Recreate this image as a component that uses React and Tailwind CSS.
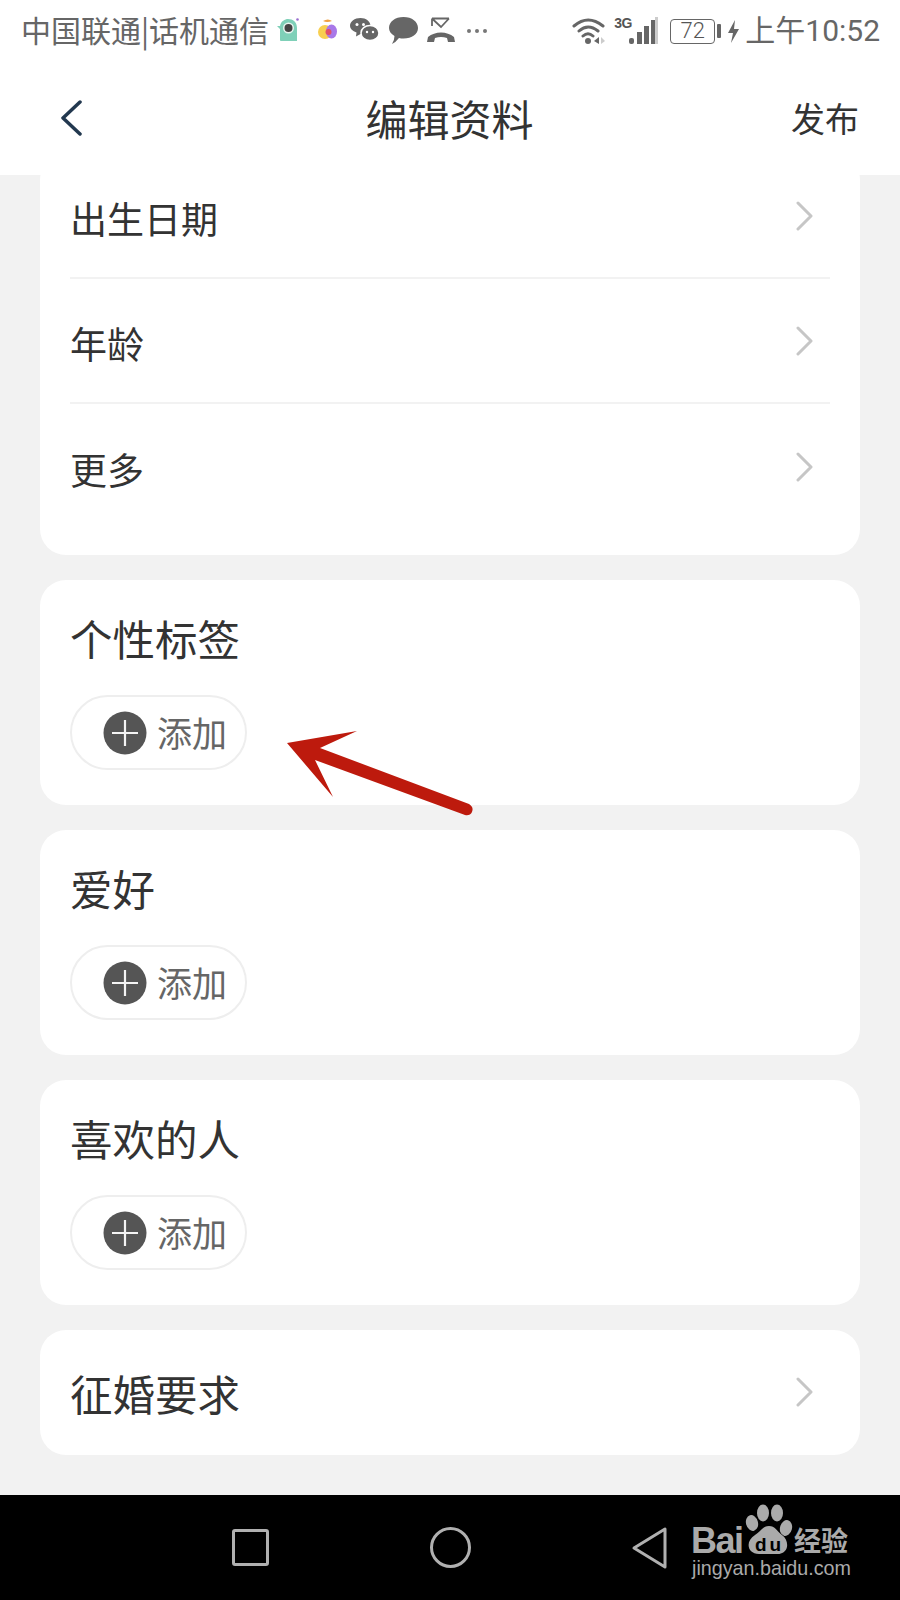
import React from "react";

const CJK = "font-['Roboto','Noto_Sans_CJK_SC',sans-serif]";

function Chevron() {
  return (
    <svg width="18" height="30" viewBox="0 0 18 30" className="shrink-0 -mt-[3px]">
      <path d="M2 2 L15 15 L2 28" fill="none" stroke="#c6c6c6" strokeWidth="3" strokeLinecap="round" strokeLinejoin="round" />
    </svg>
  );
}

function Row({ label, last }) {
  return (
    <div className={"h-[125px] pt-[4px] flex items-center justify-between pr-[16px] " + (last ? "" : "border-b-2 border-[#f2f2f2]")}>
      <span className="text-[37px] leading-[50px] font-[430] text-[#333]">{label}</span>
      <Chevron />
    </div>
  );
}

function AddPill() {
  return (
    <div className="mt-[32px] w-[177px] h-[75px] rounded-full border-2 border-[#eeeeee] flex items-center pl-[31px] gap-[10px]">
      <svg width="44" height="44" viewBox="0 0 44 44" className="shrink-0">
        <circle cx="22" cy="22" r="21.5" fill="#555555" />
        <path d="M22 9 V35 M9 22 H35" stroke="#f4f4f4" strokeWidth="2.2" />
      </svg>
      <span className="text-[35px] leading-[44px] -mt-[2px] text-[#666]">添加</span>
    </div>
  );
}

function TagCard({ title }) {
  return (
    <section className="bg-white rounded-[26px] px-[30px] pt-[33px] pb-[35px]">
      <h2 className="text-[42.5px] leading-[50px] font-[430] text-[#333]">{title}</h2>
      <AddPill />
    </section>
  );
}

function StatusBar() {
  return (
    <div className="h-[62px] bg-white flex items-center pl-[21px] pr-[20px] text-[#666]">
      <span className="text-[30px] leading-[40px] -mt-[4px] whitespace-nowrap">中国联通|话机通信</span>
      {/* notification icons */}
      <svg width="22" height="24" viewBox="0 0 22 24" className="ml-[8px] -mt-[2px] shrink-0">
        <path d="M3 8 C4 3 8 1 11 1 C16 1 20 4 20 10 V23 H4 C3.500 23 3 22.500 3 22 V11 L0 8 Z" fill="#7fd0b8" />
        <circle cx="11.500" cy="10" r="5.500" fill="#e8f4ef" />
        <circle cx="11.500" cy="10" r="4" fill="#444" />
        <circle cx="20.500" cy="1.500" r="1.300" fill="#9a6fd0" />
      </svg>
      <svg width="19" height="21" viewBox="0 0 19 21" className="ml-[19px] -mt-[4px] shrink-0">
        <circle cx="7" cy="13" r="7" fill="#f8cf4f" />
        <ellipse cx="13.500" cy="12.500" rx="5.500" ry="7" fill="#a878e8" />
        <path d="M5 2 Q10 -1 14 2 Q9 4 5 2 Z" fill="#f0a040" />
        <circle cx="10.500" cy="13" r="3" fill="#e0506a" />
      </svg>
      <svg width="29" height="24" viewBox="0 0 29 24" className="ml-[13px] -mt-[2px] shrink-0">
        <path d="M10.500 0 C16 0 20.500 3.500 20.500 8 C20.500 12.500 16 16 10.500 16 L6 18.500 L6.500 14.500 C2.500 13 0 10.800 0 8 C0 3.500 4.700 0 10.500 0 Z" fill="#666" />
        <ellipse cx="20" cy="15" rx="9" ry="7.500" fill="#666" stroke="#fff" strokeWidth="1.500" />
        <circle cx="7" cy="6.500" r="1.500" fill="#fff" />
        <circle cx="13.500" cy="6.500" r="1.500" fill="#fff" />
        <circle cx="17" cy="14" r="1.200" fill="#fff" />
        <circle cx="23" cy="14" r="1.200" fill="#fff" />
      </svg>
      <svg width="29" height="27" viewBox="0 0 29 27" className="ml-[10px] -mt-[2px] shrink-0">
        <path d="M14.500 0 C23 0 29 4.800 29 11 C29 17 23 21.500 14.500 21.500 Q12 21.500 10 21 Q7 25 3 27 Q5.500 23 5.500 19 C2 17 0 14 0 11 C0 4.800 6 0 14.500 0 Z" fill="#666" />
      </svg>
      <svg width="28" height="26" viewBox="0 0 28 26" className="ml-[9px] -mt-[2px] shrink-0">
        <path d="M5 1.500 H22 M5 1.500 L14 10 L22 1.500 M5 1.500 V9" fill="none" stroke="#666" strokeWidth="1.800" />
        <path d="M0 25 L1 20 C8 14 20 14 27 20 L28 25 H21 L20 21 C16 19.500 12 19.500 8 21 L7 25 Z" fill="#666" />
      </svg>
      <div className="ml-[12px] flex gap-[4px] shrink-0">
        <span className="w-[4px] h-[4px] rounded-full bg-[#777]" />
        <span className="w-[4px] h-[4px] rounded-full bg-[#777]" />
        <span className="w-[4px] h-[4px] rounded-full bg-[#777]" />
      </div>

      {/* right side */}
      <div className="ml-auto flex items-center shrink-0">
        <svg width="34" height="28" viewBox="0 0 34 28">
          <path d="M2 9 Q16 -3 31 9 M7 14 Q16 6 26 14 M11 19 Q16 14.500 21 19" fill="none" stroke="#666" strokeWidth="3" strokeLinecap="round" />
          <circle cx="16" cy="24" r="3" fill="#666" />
          <path d="M22 24 L27 20 V27 Z" fill="#666" />
          <path d="M29 20 L33 24 L29 27 Z" fill="#ccc" />
        </svg>
        <div className="ml-[8px] relative w-[44px] h-[28px]">
          <span className="absolute left-0 top-[-2px] font-['Liberation_Sans_Narrow','Liberation_Sans',sans-serif] text-[14px] font-bold leading-[16px] tracking-[-0.5px] text-[#555]">3G</span>
          <svg width="30" height="28" viewBox="0 0 30 28" className="absolute left-[15px] top-0">
            <rect x="0" y="21" width="5" height="6" rx="2" fill="#666" />
            <rect x="8" y="15" width="5" height="12" fill="#666" />
            <rect x="15" y="9" width="5" height="18" fill="#666" />
            <rect x="22" y="3" width="4" height="24" fill="#666" />
            <rect x="26" y="0" width="3" height="27" fill="#ccc" />
          </svg>
        </div>
        <div className="ml-[12px] w-[45px] h-[25px] rounded-[4px] border-[1.5px] border-[#666] flex items-center justify-center text-[22px] leading-[24px] font-['Roboto',sans-serif] font-light text-[#555]">72</div>
        <span className="ml-[2px] w-[4px] h-[14px] rounded-[1px] bg-[#666]" />
        <svg width="11" height="23" viewBox="0 0 11 23" className="ml-[7px]">
          <path d="M7 0 L0 13 H5 L3 23 L11 9 H6 Z" fill="#666" />
        </svg>
        <span className={"ml-[6px] text-[30px] leading-[40px] whitespace-nowrap " + CJK}>上午10:52</span>
      </div>
    </div>
  );
}

function Header() {
  return (
    <header className="h-[113px] bg-white flex items-center justify-between pl-[60px] pr-[41px] pb-[1px] relative z-10">
      <svg width="22" height="36" viewBox="0 0 22 36">
        <path d="M20 2 L3 18 L20 34" fill="none" stroke="#22384f" strokeWidth="3.500" strokeLinecap="round" strokeLinejoin="round" />
      </svg>
      <h1 className="text-[42px] leading-[56px] font-[430] text-[#333] ml-[26px]">编辑资料</h1>
      <span className="text-[34px] leading-[46px] font-[430] text-[#333]">发布</span>
    </header>
  );
}

function NavBar() {
  return (
    <nav className="h-[105px] bg-black flex items-center pl-[232px]">
      <div className="w-[37px] h-[37px] rounded-[3px] border-[3px] border-[#b0b0b0]" />
      <div className="ml-[161px] w-[41px] h-[41px] rounded-full border-[3px] border-[#b0b0b0]" />
      <svg width="38" height="44" viewBox="0 0 38 44" className="ml-[160px]">
        <path d="M34 3 V41 L3 22 Z" fill="none" stroke="#b0b0b0" strokeWidth="3" strokeLinejoin="round" />
      </svg>
    </nav>
  );
}

// Baidu jingyan mark in the corner of the nav bar
function Watermark() {
  return (
    <svg width="180" height="100" viewBox="0 0 180 100" className="absolute left-[685px] top-[1495px] pointer-events-none">
      <text x="6" y="58" fontFamily="Liberation Sans" fontWeight="700" fontSize="36" fill="#aaaaaa" textLength="53">Bai</text>
      <ellipse cx="67" cy="28" rx="6" ry="8" fill="#aaaaaa" transform="rotate(-15 67 28)" />
      <ellipse cx="78" cy="18" rx="6" ry="8.500" fill="#aaaaaa" />
      <ellipse cx="92" cy="18" rx="6" ry="8.500" fill="#aaaaaa" />
      <ellipse cx="101" cy="33" rx="6" ry="8" fill="#aaaaaa" transform="rotate(15 101 33)" />
      <path d="M84 31 C90 31 92 36 97 40 C105 46 104 59 92 59 H74 C62 59 60 46 70 40 C76 36 78 31 84 31 Z" fill="#aaaaaa" />
      <text x="83" y="56" textAnchor="middle" fontFamily="Liberation Sans" fontWeight="700" fontSize="19" fill="#000" textLength="26">du</text>
      <text x="109" y="56" fontFamily="Noto Sans CJK SC" fontWeight="700" fontSize="27" fill="#aaaaaa">经验</text>
      <text x="7" y="80" fontFamily="Liberation Sans" fontSize="21" fill="#aaaaaa" textLength="159" lengthAdjust="spacingAndGlyphs">jingyan.baidu.com</text>
    </svg>
  );
}

export default function App() {
  return (
    <div className="relative w-[900px] h-[1600px] flex flex-col bg-[#f2f2f2] overflow-hidden font-['Noto_Sans_CJK_SC',sans-serif]">
      <StatusBar />
      <Header />
      <main className="h-[1320px] overflow-hidden px-[40px] flex flex-col gap-[25px]">
        <section className="-mt-[21px] shrink-0 bg-white rounded-[26px] px-[30px] pb-[26px]">
          <Row label="出生日期" />
          <Row label="年龄" />
          <Row label="更多" last />
        </section>
        <TagCard title="个性标签" />
        <TagCard title="爱好" />
        <TagCard title="喜欢的人" />
        <section className="bg-white rounded-[26px] pl-[30px] pr-[46px] h-[125px] pt-[1px] flex items-center justify-between">
          <span className="text-[42.5px] leading-[50px] font-[430] text-[#333]">征婚要求</span>
          <Chevron />
        </section>
      </main>
      <NavBar />
      {/* red callout arrow */}
      <svg width="200" height="100" viewBox="0 0 200 100" className="absolute left-[280px] top-[725px] pointer-events-none">
        <path d="M7 18 L77 6 L40 23 L189 79 Q194 82 192 87 Q190 91 185 90 L35 35 L53 72 Z" fill="#bd1a0d" />
      </svg>
      <Watermark />
    </div>
  );
}
